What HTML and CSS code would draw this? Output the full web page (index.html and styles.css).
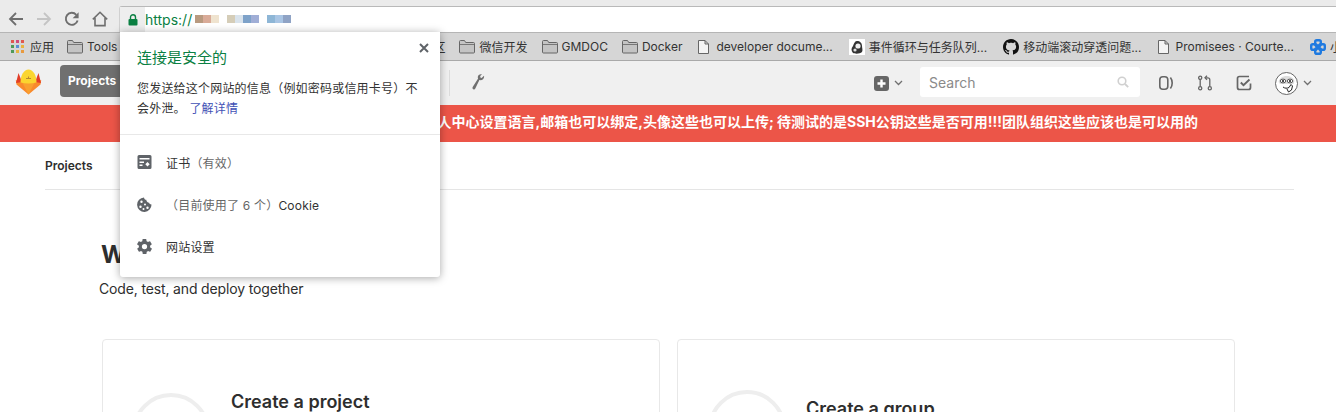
FILE: index.html
```html
<!DOCTYPE html>
<html lang="zh-CN">
<head>
<meta charset="utf-8">
<title>GitLab</title>
<link rel="stylesheet" href="styles.css">
</head>
<body>
<svg class="sprite" aria-hidden="true">
  <symbol id="folder" viewBox="0 0 16 14"><path d="M.5 12V1.5a1 1 0 0 1 1-1h4l1.2 2h7.8a1 1 0 0 1 1 1V12a1 1 0 0 1-1 1h-13a1 1 0 0 1-1-1z" fill="#c4c4c4" stroke="#666"/><path d="M1 4.5h14" stroke="#777"/></symbol>
  <symbol id="page" viewBox="0 0 11 14"><path d="M.5.5h6.5l3.5 3.5v9.5H.5z M7 .5V4h3.5" fill="#f4f4f4" stroke="#666"/></symbol>
</svg>

<header class="toolbar">
  <svg class="tb-icon" width="16" height="16" viewBox="0 0 16 16"><path d="M15 8H2M8 2 2 8l6 6" fill="none" stroke="#6e6e6e" stroke-width="1.8"/></svg>
  <svg class="tb-icon" width="16" height="16" viewBox="0 0 16 16"><path d="M1 8h13M8 2l6 6-6 6" fill="none" stroke="#c4c4c4" stroke-width="1.8"/></svg>
  <svg class="tb-icon" width="16" height="16" viewBox="0 0 16 16"><path d="M13.6 9.500A6 6 0 1 1 12.300 3.800" fill="none" stroke="#6e6e6e" stroke-width="1.9"/><path d="M14.600 1.200v6h-6z" fill="#6e6e6e"/></svg>
  <svg class="tb-icon" width="16" height="16" viewBox="0 0 16 16"><path d="M.8 8.400 8 1.300l7.200 7.100M3 7v7.600h10V7" fill="none" stroke="#6e6e6e" stroke-width="1.6"/></svg>
  <div class="urlbar">
    <div class="lockbox"><svg width="10" height="12" viewBox="0 0 10 12"><path d="M2.500 5V3.200a2.500 2.500 0 0 1 5 0V5" fill="none" stroke="#0b8043" stroke-width="1.4"/><rect x="0.5" y="5" width="9" height="6.500" rx="1" fill="#0b8043"/></svg></div>
    <span class="url">https://</span>
    <div class="url-blur"></div>
  </div>
</header>

<nav class="bookmarks">
  <div class="bm bm-apps">
    <svg width="13" height="13" viewBox="0 0 13 13"><path fill="#e0584f" d="M0 0h3v3H0z"/><path fill="#d24a7a" d="M5 0h3v3H5z"/><path fill="#e0584f" d="M10 0h3v3h-3z"/><path fill="#4f9a58" d="M0 5h3v3H0z"/><path fill="#5a8fd6" d="M5 5h3v3H5z"/><path fill="#e8b33f" d="M10 5h3v3h-3z"/><path fill="#4f9a58" d="M0 10h3v3H0z"/><path fill="#e8b33f" d="M5 10h3v3H5z"/><path fill="#e89a3f" d="M10 10h3v3h-3z"/></svg>
    <span>应用</span>
  </div>
  <div class="bm"><svg class="bm-ic" viewBox="0 0 16 14"><use href="#folder"/></svg><span>Tools</span></div>
  <div class="bm bm-hidden"><span>区</span></div>
  <div class="bm"><svg class="bm-ic" viewBox="0 0 16 14"><use href="#folder"/></svg><span>微信开发</span></div>
  <div class="bm"><svg class="bm-ic" viewBox="0 0 16 14"><use href="#folder"/></svg><span>GMDOC</span></div>
  <div class="bm bm-wide"><svg class="bm-ic" viewBox="0 0 16 14"><use href="#folder"/></svg><span>Docker</span></div>
  <div class="bm bm-wide"><svg class="bm-pg" viewBox="0 0 11 14"><use href="#page"/></svg><span>developer docume...</span></div>
  <div class="bm bm-wide">
    <svg class="bm-ic bm-square" viewBox="0 0 16 16"><rect width="16" height="16" fill="#fff"/><path d="M8 2c3 0 5 2 5 5 0 2 1 4 0 6-2 2-7 2-9 1-2-2-2-5 0-7 1-3 2-5 4-5z" fill="#333"/><circle cx="9" cy="7" r="2.600" fill="#eee"/><circle cx="6" cy="11" r="1.600" fill="#ddd"/></svg>
    <span>事件循环与任务队列...</span>
  </div>
  <div class="bm bm-wide">
    <svg class="bm-ic bm-square" viewBox="0 0 16 16"><path fill="#111" d="M8 0C3.58 0 0 3.58 0 8c0 3.54 2.29 6.53 5.47 7.59.4.07.55-.17.55-.38 0-.19-.01-.82-.01-1.49-2.01.37-2.53-.49-2.69-.94-.09-.23-.48-.94-.82-1.13-.28-.15-.68-.52-.01-.53.63-.01 1.08.58 1.23.82.72 1.21 1.87.87 2.33.66.07-.52.28-.87.51-1.07-1.78-.2-3.64-.89-3.64-3.95 0-.87.31-1.59.82-2.15-.08-.2-.36-1.02.08-2.12 0 0 .67-.21 2.2.82.64-.18 1.32-.27 2-.27.68 0 1.36.09 2 .27 1.53-1.04 2.2-.82 2.2-.82.44 1.1.16 1.92.08 2.12.51.56.82 1.27.82 2.15 0 3.07-1.87 3.75-3.65 3.95.29.25.54.73.54 1.48 0 1.07-.01 1.93-.01 2.2 0 .21.15.46.55.38A8.013 8.013 0 0016 8c0-4.42-3.58-8-8-8z"/></svg>
    <span>移动端滚动穿透问题...</span>
  </div>
  <div class="bm bm-wide"><svg class="bm-pg" viewBox="0 0 11 14"><use href="#page"/></svg><span>Promisees · Courte...</span></div>
  <div class="bm">
    <svg class="bm-ic bm-square" viewBox="0 0 16 16"><g fill="none" stroke="#1f7ae0" stroke-width="2.400"><rect x="5.200" y="1.200" width="5.600" height="5.600" rx="1.600"/><rect x="5.200" y="9.200" width="5.600" height="5.600" rx="1.600"/><rect x="1.200" y="5.200" width="5.600" height="5.600" rx="1.600"/><rect x="9.200" y="5.200" width="5.600" height="5.600" rx="1.600"/></g></svg>
    <span>小</span>
  </div>
</nav>

<div class="appnav">
  <svg class="logo" width="27" height="26" viewBox="0 0 27 26">
    <path d="M13.500 25.500 1.500 15.500.8 11 6 13h15l5.200-2-.7 4.500z" fill="#f98a2c"/>
    <path d="M13.500 25.500 7 13h13z" fill="#f9a02f"/>
    <path d="M1 14 3.500 4 7 13z" fill="#e23d28"/>
    <path d="M26 14 23.500 4 20 13z" fill="#e23d28"/>
    <path d="M5.500 13.500C5.500 6 9 .5 13.500.5S21.500 6 21.500 13.500c-5 1.200-11 1.200-16 0z" fill="#fbd52f"/>
    <path d="M11 9.500h5M13.500 7.500v2" stroke="#b9892a" stroke-width="1"/>
  </svg>
  <a class="nav-active">Projects</a>
  <span class="nav-sep"></span>
  <svg class="nav-wrench" width="14" height="16" viewBox="0 0 14 16"><path d="M13 1.800 10.600 4 9.400 3.400 9.200 2 11 .3C9 -.3 6.800.8 6.800 3c0 .7.1 1.200.3 1.600L1.700 13c-.5.9-.2 1.800.6 2.300.8.4 1.600.1 2-.7L8.400 6c2.800.7 5.300-1.300 4.600-4.200z" fill="#707070"/></svg>
  <div class="nav-right">
    <div class="nav-plus">
      <svg width="15" height="15" viewBox="0 0 15 15"><rect width="15" height="15" rx="3" fill="#666"/><path d="M7.500 3.500v8M3.500 7.500h8" stroke="#fff" stroke-width="2.400"/></svg>
      <svg class="chev" width="9" height="6" viewBox="0 0 9 6"><path d="M1 1l3.500 3.500L8 1" fill="none" stroke="#707070" stroke-width="1.300"/></svg>
    </div>
    <div class="search">
      <span>Search</span>
      <svg width="12" height="12" viewBox="0 0 12 12"><circle cx="5" cy="5" r="3.800" fill="none" stroke="#d0d0d0" stroke-width="1.600"/><path d="M8 8l3.200 3.200" stroke="#d0d0d0" stroke-width="1.800"/></svg>
    </div>
    <svg class="nav-ic" width="16" height="16" viewBox="0 0 16 16"><rect x="1.800" y="1.800" width="8" height="12.400" rx="3" fill="none" stroke="#666" stroke-width="1.600"/><path d="M12.400 2.500C14.800 5.500 14.800 10.500 12.400 13.500" fill="none" stroke="#666" stroke-width="1.600"/></svg>
    <svg class="nav-ic" width="16" height="16" viewBox="0 0 16 16"><g fill="none" stroke="#666" stroke-width="1.300"><circle cx="3.200" cy="2.800" r="1.600"/><circle cx="3.200" cy="13.200" r="1.600"/><circle cx="12.800" cy="13.200" r="1.600"/><path d="M3.200 4.400v7.200M12.800 11.600V4.800c0-1.200-.8-2-2-2H8"/><path d="M10 .8 8 2.800l2 2"/></g></svg>
    <svg class="nav-ic" width="16" height="16" viewBox="0 0 16 16"><path d="M14.500 8.500v4c0 1.100-.9 2-2 2h-9c-1.100 0-2-.9-2-2v-9c0-1.100.9-2 2-2h9.500" fill="none" stroke="#666" stroke-width="1.700"/><path d="M4.800 7.500 7.500 10.200 13.500 4.500" fill="none" stroke="#666" stroke-width="1.900"/></svg>
    <div class="nav-user">
      <svg width="23" height="23" viewBox="0 0 23 23"><circle cx="11.500" cy="11.500" r="11" fill="#fff" stroke="#555" stroke-width=".9"/><path d="M3.500 10c1-4 4-6 8-6s7 2 8 5l-1 3H5z" fill="#ddd"/><ellipse cx="8" cy="9" rx="2.800" ry="1.900" fill="#fff" stroke="#333" stroke-width=".8"/><ellipse cx="15" cy="9" rx="2.800" ry="1.900" fill="#fff" stroke="#333" stroke-width=".8"/><circle cx="8" cy="9" r="1.100" fill="#222"/><circle cx="15" cy="9" r="1.100" fill="#222"/><path d="M8 15c2 1.500 4 1.500 6 .5l2-3 1.500 1.500-1 4-3 2-1.500-3" fill="#fff" stroke="#222" stroke-width="1"/></svg>
      <svg class="chev" width="9" height="6" viewBox="0 0 9 6"><path d="M1 1l3.500 3.500L8 1" fill="none" stroke="#707070" stroke-width="1.300"/></svg>
    </div>
  </div>
</div>

<div class="banner"><p>个人中心设置语言,邮箱也可以绑定,头像这些也可以上传; 待测试的是SSH公钥这些是否可用!!!团队组织这些应该也是可以用的</p></div>

<main class="content">
  <div class="subnav"><span>Projects</span></div>
  <section class="welcome">
    <h1>Welcome to GitLab</h1>
    <p>Code, test, and deploy together</p>
  </section>
  <section class="cards">
    <article class="card card-project">
      <div class="ring"></div>
      <h2>Create a project</h2>
    </article>
    <article class="card card-group">
      <div class="ring"></div>
      <h2>Create a group</h2>
    </article>
  </section>
</main>

<aside class="popup">
  <button class="popup-close" aria-label="关闭"><svg width="10" height="10" viewBox="0 0 10 10"><path d="M1 1l8 8M9 1 1 9" stroke="#5f6368" stroke-width="2"/></svg></button>
  <div class="popup-head">
    <h3>连接是安全的</h3>
    <p>您发送给这个网站的信息（例如密码或信用卡号）不会外泄。 <a>了解详情</a></p>
  </div>
  <ul class="popup-list">
    <li>
      <svg width="14" height="14" viewBox="0 0 14 14"><path fill-rule="evenodd" d="M1.500 0h11A1.500 1.500 0 0 1 14 1.500v11a1.500 1.500 0 0 1-1.500 1.500h-11A1.500 1.500 0 0 1 0 12.500v-11A1.500 1.500 0 0 1 1.500 0zM2 3v1.500h10V3zM2 6.500V8h4.500V6.500zM2 9.500V11h3V9.500zM10 7l-2.200 2.200L10 11.400l2.200-2.200z" fill="#5f6368"/></svg>
      <span>证书<em>（有效）</em></span>
    </li>
    <li>
      <svg width="15" height="15" viewBox="0 0 15 15"><path fill-rule="evenodd" d="M7 .5c.2 1.500 1 2.300 2.300 2.300.1 1.700 1.200 2.900 2.800 2.900.3 1.200 1.300 1.800 2.400 1.700A7.200 7.200 0 1 1 7 .5zM4.500 3.500a1.200 1.200 0 1 0 0 2.400 1.200 1.200 0 0 0 0-2.400zM8 6.500a1 1 0 1 0 0 2 1 1 0 0 0 0-2zM3.500 8.500a1.200 1.200 0 1 0 0 2.400 1.200 1.200 0 0 0 0-2.400zM10.500 9.500a1.200 1.200 0 1 0 0 2.400 1.200 1.200 0 0 0 0-2.400zM6.500 11a1 1 0 1 0 0 2 1 1 0 0 0 0-2z" fill="#5f6368"/></svg>
      <span><em>（目前使用了 6 个）</em>Cookie</span>
    </li>
    <li>
      <svg width="15" height="15" viewBox="2 2 20 20"><path fill="#5f6368" d="M19.400 13c.1-.3.100-.7.100-1s0-.7-.1-1l2.100-1.600c.2-.1.200-.4.100-.6l-2-3.500c-.1-.2-.4-.3-.6-.2l-2.500 1c-.5-.4-1.100-.7-1.700-1l-.4-2.600c0-.3-.2-.4-.5-.4h-4c-.2 0-.5.100-.5.400l-.4 2.600c-.6.300-1.200.6-1.700 1l-2.500-1c-.2-.1-.5 0-.6.200l-2 3.500c-.1.200-.1.500.1.600L4.600 11c0 .3-.1.700-.1 1s0 .7.100 1l-2.100 1.600c-.2.100-.2.400-.1.600l2 3.500c.1.200.4.300.6.200l2.500-1c.5.400 1.100.7 1.700 1l.4 2.600c0 .3.300.4.500.4h4c.3 0 .5-.1.500-.4l.4-2.600c.6-.3 1.200-.6 1.700-1l2.500 1c.2.100.5 0 .6-.2l2-3.500c.1-.2.100-.5-.1-.6zM12 15.500a3.500 3.500 0 1 1 0-7 3.500 3.500 0 0 1 0 7z"/></svg>
      <span>网站设置</span>
    </li>
  </ul>
</aside>
</body>
</html>
```

FILE: styles.css
```css
* { box-sizing: border-box; }
html, body { margin: 0; padding: 0; }
body {
  position: relative;
  height: 412px;
  overflow: hidden;
  background: #fff;
  color: #2e2e2e;
  font-family: Inter, "Noto Sans CJK SC", sans-serif;
}
.sprite { position: absolute; width: 0; height: 0; }

.toolbar {
  display: flex;
  align-items: flex-end;
  height: 32px;
  padding-left: 8px;
  background: #ebebeb;
}
.tb-icon { margin: 0 12px 5px 0; flex: none; }
.urlbar {
  flex: 1;
  display: flex;
  align-items: center;
  height: 26px;
  margin-left: -1px;
  background: #fff;
  border-top: 1px solid #b9b9b9;
  border-left: 1px solid #d0d0d0;
  border-radius: 3px 0 0 0;
}
.lockbox {
  display: flex;
  align-items: center;
  justify-content: center;
  width: 25px;
  height: 25px;
  background: #eeeeee;
}
.url { font-size: 14px; color: #0b8043; }
.url-blur {
  width: 96px;
  height: 8px;
  margin: -2px 0 0 3px;
  background: linear-gradient(90deg,
    #b89a80 0 8px, #d9ab98 8px 16px, #efe3cf 16px 24px, #fff 24px 32px,
    #d5cdb8 32px 40px, #d9e3ec 40px 48px, #7ea2c9 48px 56px, #a0aed6 56px 64px, #fff 64px 72px,
    #8eb6d6 72px 80px, #a9c5e4 80px 88px, #8fa3c5 88px 96px);
}

.bookmarks {
  display: flex;
  align-items: center;
  height: 29px;
  padding-left: 11px;
  background: #d6d6d6;
  border-top: 1px solid #b5b5b5;
  border-bottom: 1px solid #a9a9a9;
  font-size: 12px;
  color: #333;
  white-space: nowrap;
  overflow: hidden;
}
.bm { display: flex; align-items: center; gap: 4px; margin-right: 14px; flex: none; }
.bm-apps { gap: 6px; margin-right: 13px; }
.bm-wide { margin-right: 16px; }
.bm-ic { width: 16px; height: 14px; }
.bm-square { height: 16px; }
.bm-pg { width: 11px; height: 14px; margin-right: 3px; }
.bm-hidden { margin-left: 302px; }

.appnav {
  display: flex;
  align-items: center;
  height: 44px;
  padding: 0 24px 0 15px;
  background: #f0f0f0;
}
.logo { flex: none; margin-bottom: 2px; }
.nav-active {
  display: block;
  height: 32px;
  width: 66px;
  margin: 0 0 4px 18px;
  padding-left: 8px;
  line-height: 32px;
  background: #707070;
  color: #fff;
  border-radius: 4px;
  font-size: 12px;
  font-weight: 700;
}
.nav-sep { width: 1px; height: 26px; margin-left: 323px; background: #dcdcdc; }
.nav-wrench { margin-left: 21px; margin-bottom: 2px; }
.nav-right { display: flex; align-items: center; gap: 23px; margin-left: auto; }
.nav-plus, .nav-user { display: flex; align-items: center; gap: 5px; }
.nav-plus { margin-right: -6px; }
.search {
  display: flex;
  align-items: center;
  justify-content: space-between;
  width: 220px;
  height: 30px;
  margin: 0 -5px 2px 0;
  padding: 0 11px 0 9px;
  background: #fff;
  border-radius: 3px;
  font-size: 14px;
  color: #8a8a8a;
}
.nav-ic { flex: none; }

.banner {
  height: 37px;
  padding-right: 138px;
  background: #ec5548;
  color: #fff;
  font-size: 14px;
  font-weight: 700;
  line-height: 34px;
  text-align: right;
  white-space: nowrap;
}
.banner p { margin: 0; }

.content { padding: 0 42px 0 45px; }
.subnav {
  height: 48px;
  border-bottom: 1px solid #e5e5e5;
  font-size: 12px;
  font-weight: 600;
  line-height: 48px;
}
.welcome { margin: 47px 0 0 54px; }
.welcome h1 { margin: 0 0 0 2px; font-size: 24px; line-height: 36px; font-weight: 700; }
.welcome p { margin: 6px 0 0; font-size: 14px; line-height: 20px; letter-spacing: -.15px; }
.cards { display: flex; gap: 17px; margin: 40px 0 0 57px; }
.card {
  display: flex;
  align-items: flex-start;
  width: 558px;
  height: 180px;
  border: 1px solid #e8e8e8;
  border-radius: 4px;
}
.ring {
  flex: none;
  width: 78px;
  height: 78px;
  border: 4px solid #eeeeee;
  border-radius: 50%;
}
.card h2 { margin: 0; font-size: 18px; font-weight: 600; line-height: 24px; }
.card-project { padding: 53px 0 0 29px; }
.card-project h2 { margin: -3px 0 0 21px; }
.card-group { padding: 50px 0 0 30px; }
.card-group h2 { margin: 7px 0 0 20px; }

.popup {
  position: absolute;
  left: 120px;
  top: 32px;
  width: 320px;
  height: 245px;
  background: #fff;
  border-radius: 0 0 3px 3px;
  box-shadow: 0 1px 8px rgba(0, 0, 0, .35);
  letter-spacing: .2px;
}
.popup-close {
  position: absolute;
  top: 11px;
  right: 11px;
  display: flex;
  padding: 0;
  border: 0;
  background: none;
}
.popup-head { height: 103px; padding: 16px 17px 0; border-bottom: 1px solid #e8e8e8; }
.popup-head h3 { margin: 0; font-size: 15px; font-weight: 400; line-height: 20px; color: #0b8043; letter-spacing: 0; }
.popup-head p { margin: 11px 0 0; font-size: 12px; line-height: 20px; color: #333; }
.popup-head a { color: #3f51b5; }
.popup-list { list-style: none; margin: 6px 0 0; padding: 0; }
.popup-list li {
  display: flex;
  align-items: center;
  height: 42px;
  padding-left: 17px;
  font-size: 12px;
  color: #333;
}
.popup-list svg { flex: none; width: 15px; margin-right: 14px; }
.popup-list em { font-style: normal; color: #666; }
```
